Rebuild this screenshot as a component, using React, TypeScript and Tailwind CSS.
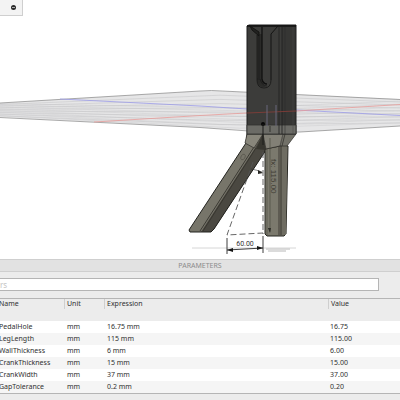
type Parameter = { name: string; unit: string; expression: string; value: string };

const parameters: Parameter[] = [
  { name: "PedalHole", unit: "mm", expression: "16.75 mm", value: "16.75" },
  { name: "LegLength", unit: "mm", expression: "115 mm", value: "115.00" },
  { name: "WallThickness", unit: "mm", expression: "6 mm", value: "6.00" },
  { name: "CrankThickness", unit: "mm", expression: "15 mm", value: "15.00" },
  { name: "CrankWidth", unit: "mm", expression: "37 mm", value: "37.00" },
  { name: "GapTolerance", unit: "mm", expression: "0.2 mm", value: "0.20" },
];

const gridSteps = [1, 2, 3, 4, 5, 6, 7, 8];

function ModelView() {
  return (
    <svg viewBox="0 0 400 259" className="block w-full" role="img" aria-label="Model with two legs">
      {/* Ground plane */}
      <path d="M0 103 L200 91 L218 91 L400 99 V126 L300 132 L245 130 L0 117Z" fill="#e6e6e7" />
      {gridSteps.map(i => (
        <g key={i} fill="none" strokeWidth=".5">
          <path d={`M0 ${103 + i * 1.6} L220 ${91 + i * 4.2} L400 ${99 + i * 3}`} stroke="#c3c3c5" />
          <path d={`M0 ${102 + i * 1.7} L240 ${105 + i * 2.9} L400 ${98 + i * 3.1}`} stroke="#cdcdcf" />
        </g>
      ))}
      <path d="M0 103 L200 91 Q212 90 222 91 L400 99.5" fill="none" stroke="#858585" strokeWidth=".7" />
      <path d="M0 117.5 L200 127.5 L270 132.5 L300 132 L400 126" fill="none" stroke="#858585" strokeWidth=".7" />
      <path d="M60 99 L200 106 L247 109 M296 110 L400 115.5" fill="none" stroke="#9b9be8" strokeWidth=".8" />
      <path d="M94 122 L200 115.5 L247 113 M296 111 L400 104.5" fill="none" stroke="#e79b98" strokeWidth=".8" />

      {/* Floor shadows */}
      <path d="M192 248 H296" stroke="#d6d6d6" strokeWidth="1" />
      <path d="M266 249 H290 M268 251 H286" stroke="#cfcfcf" strokeWidth="1.5" />

      {/* Left leg */}
      <path d="M247 134 L246 143 L189 230 L190 232 H211 L214 229 L266 150 L263 134Z" fill="#77756a" />
      <path d="M255 148 L263 134 L266 150 L214 229 L211 232 H201Z" fill="#4a4841" />
      <path d="M247 134 L246 143 L189 230 L190 232 H211 L214 229 L266 150" fill="none" stroke="#22221e" strokeWidth="1" />
      <path d="M254 147 L200 231" stroke="#2b2a24" strokeWidth=".8" />
      <path d="M256 148 L203 231" stroke="#2b2a24" strokeWidth=".6" />
      <ellipse cx="243" cy="157" rx="2" ry="3" transform="rotate(30 243 157)" fill="none" stroke="#55534a" strokeWidth=".7" />

      {/* Right leg */}
      <path d="M265 149 L280 146 L288 146 L286 234 L284 236 H267 L265 234Z" fill="#7b796d" stroke="#25251f" strokeWidth="1" />
      <path d="M282 146 L287 146 L286 235 H282Z" fill="#6e6c61" />
      <path d="M279 147 V235" stroke="#29271f" strokeWidth=".7" />
      <path d="M281 147 V235" stroke="#29271f" strokeWidth=".9" />
      <path d="M267 149 V235" stroke="#4c4a41" strokeWidth=".6" />

      {/* Shoulders */}
      <path d="M247 134 H263 L254 148 L245 143Z" fill="#88867b" />
      <path d="M263 134 H283 L280 146 L266 149Z" fill="#828076" />
      <path d="M283 134 H296 L287 146 L280 146Z" fill="#727168" />
      <path d="M247 134 L245 143 L254 148 L263 134 L266 149 L280 146 L287 146 L296 134 M280 146 L283 134 M282 146 L285 134" fill="none" stroke="#2c2b26" strokeWidth=".7" />
      <path d="M263 134 L266 150 L256 149Z" fill="#37362f" />
      <text x="271" y="159" transform="rotate(90 271 159)" fontSize="8" fontFamily="Liberation Sans, sans-serif" fill="#3e3c34">fx: 115.00</text>

      {/* Crank block */}
      <path d="M247 26 L249 25 L296 25 V134 H247Z" fill="#3c3c3a" stroke="#1b1b1a" strokeWidth="1" />
      <path d="M282 27 H295 V125 H282Z" fill="#363634" />
      <path d="M247 125 H296 V134 H247Z" fill="#6b6b66" stroke="#30302d" strokeWidth=".8" />
      <path d="M247 26 H296" stroke="#101010" strokeWidth="1.5" />
      <path d="M257 34 H262 V80 Q263 86 266 87 Q257 88 257 80Z" fill="#2a2a28" />
      <path d="M271 80 Q271 88 264 88 Q257 88 257 80 V35" fill="none" stroke="#1b1b1a" strokeWidth=".9" />
      <path d="M271 80 V34 L278 26" fill="none" stroke="#131312" strokeWidth="1" />
      <path d="M250 26 L259 32 V36 L252 30Z" fill="#222220" stroke="#121211" strokeWidth=".9" />
      <path d="M259 36 V78 M257 79 H260 Q262 86 267 86" fill="none" stroke="#1b1b1a" strokeWidth=".8" />
      <path d="M262 27 V79 Q263 84 267 84" fill="none" stroke="#111" strokeWidth="1.3" />
      <path d="M279 27 V134 M282 27 V134" stroke="#20201f" strokeWidth=".8" />
      <path d="M285 27 V134" stroke="#2b2b29" strokeWidth=".5" />
      <path d="M293 27 V134" stroke="#4b4b48" strokeWidth=".5" />
      <path d="M247 113 L296 111" stroke="#803c38" strokeWidth=".9" />
      <path d="M267 105 V126 M276 105 V126" stroke="#69677b" strokeWidth="1" />
      <path d="M270 126 V132" stroke="#34342f" strokeWidth="1" />

      {/* Sketch lines and dimension */}
      <circle cx="263" cy="124" r="2" fill="#080808" />
      <path d="M263 124 V145" stroke="#1d1d1b" strokeWidth="1" />
      <path d="M263 152 V234 M253 162 L227 235 L263 233" fill="none" stroke="#555" strokeWidth=".9" strokeDasharray="6 3" />
      <path d="M251 169 Q257 170 262 172" fill="none" stroke="#333" strokeWidth=".6" />
      <path d="M263 173 L258 170 L258 174Z M270 233 L268 228 H271Z" fill="#252521" />
      <path d="M270 138 V232" stroke="#45433b" strokeWidth=".6" />
      <path d="M227 238 V254 M263 236 V253 M227 250 L263 248" stroke="#292929" strokeWidth=".9" />
      <path d="M227 250 L233 248 V252Z M263 248 L257 246 V250Z" fill="#151515" />
      <text x="245" y="246" textAnchor="middle" fontSize="7" className="font-['Liberation_Sans_Narrow','Roboto',sans-serif]" fill="#333">60.00</text>
    </svg>
  );
}

export default function App() {
  return (
    <div className="min-h-screen flex flex-col overflow-hidden bg-[#ececec] font-['Noto_Sans',sans-serif] text-[7px] leading-3 text-[#303030]">
      {/* Viewport */}
      <main className="relative bg-white">
        <ModelView />
        <div className="absolute left-0 top-0 flex h-4 w-[23px] items-center justify-end border-r border-b border-[#cfcfcf] bg-[#f3f3f3] pr-[6px]">
          <button type="button" aria-label="Collapse" className="flex size-[5px] items-center justify-center rounded-full bg-[#292929]">
            <span className="h-px w-[3px] bg-[#aaa]" />
          </button>
        </div>
      </main>

      {/* Parameters */}
      <section className="flex-1">
        <h2 className="h-[13px] border-y border-[#cfcfcf] bg-[#e2e2e2] text-center leading-3 text-[#8c8c8c]">PARAMETERS</h2>
        <div className="pt-[6px] pr-[21px] pb-[7px]">
          <input
            type="text"
            aria-label="Filter parameters"
            placeholder="rs"
            className="block h-[13px] w-full border border-l-0 border-[#b5b5b5] bg-white text-[8px] outline-none placeholder:text-[#c4c4c4]"
          />
        </div>
        <table className="w-full table-fixed border-collapse border-y border-[#b5b5b5] text-left">
          <colgroup>
            <col className="w-[16%]" />
            <col className="w-[10%]" />
            <col className="w-[56%]" />
            <col />
          </colgroup>
          <thead>
            <tr className="h-[22px] align-top">
              <th className="p-0 font-normal"><span className="-ml-px block leading-[10px]">Name</span></th>
              {["Unit", "Expression", "Value"].map(label => (
                <th key={label} className="p-0 font-normal">
                  <span className="block border-l border-[#cfcfcf] pl-0.5 leading-[10px]">{label}</span>
                </th>
              ))}
            </tr>
          </thead>
          <tbody>
            {parameters.map(p => (
              <tr key={p.name} className="h-3 bg-white even:bg-[#f5f5f5]">
                <td className="p-0"><span className="-ml-px block">{p.name}</span></td>
                <td className="p-0 pl-[3px]">{p.unit}</td>
                <td className="p-0 pl-[3px]">{p.expression}</td>
                <td className="p-0 pl-[2px]">{p.value}</td>
              </tr>
            ))}
          </tbody>
        </table>
      </section>
    </div>
  );
}
